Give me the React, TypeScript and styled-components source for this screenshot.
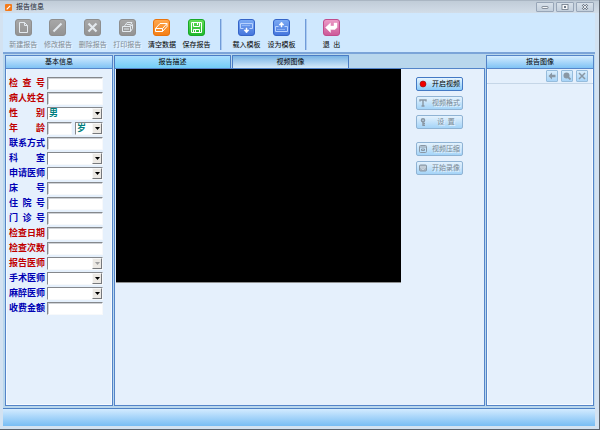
import React from "react";
import styled, { createGlobalStyle, css } from "styled-components";

const GlobalStyle = createGlobalStyle`
  * { box-sizing: border-box; }
  body {
    margin: 0;
    font-family: "Liberation Sans", "Noto Sans CJK SC", sans-serif;
    font-size: 7px;
    line-height: 10px;
    color: #000;
  }
  button, input, select { font: inherit; color: inherit; margin: 0; padding: 0; }
`;

const Window = styled.div`
  display: flex;
  flex-direction: column;
  min-height: 100vh;
  padding: 0 4px 3px 3px;
  background: #d3e2f1;
  border-right: 1px solid #5b626c;
  border-bottom: 1px solid #5b626c;
`;

const TitleBar = styled.header`
  display: flex;
  align-items: center;
  gap: 4px;
  height: 13px;
  margin: 0 -4px 0 -3px;
  padding: 0 5px;
  background: linear-gradient(#c0ccd8, #d2dde8);
  border-top: 1px solid #aab6c3;
`;

const Title = styled.h1`
  flex: 1;
  margin: 0;
  font-size: 7px;
  font-weight: 400;
  color: #1c2530;
`;

const Caption = styled.div`
  display: flex;
  gap: 2px;
`;

const CaptionButton = styled.button`
  display: flex;
  align-items: center;
  justify-content: center;
  width: 18px;
  height: 10px;
  background: linear-gradient(#d8e1ea, #c3cfdc);
  border: 1px solid #98a6b8;
  border-radius: 1px;
`;

const Toolbar = styled.nav`
  display: flex;
  height: 41px;
  padding: 6px 3px 0;
  background: #cfe8fe;
  border-bottom: 2px solid #7ba4d8;
`;

const ToolGroup = styled.div<{ $width: number }>`
  display: flex;
  justify-content: space-around;
  width: ${(p) => p.$width}px;
`;

const Divider = styled.div`
  width: 2px;
  height: 31px;
  margin: 0 7px 0 6px;
  background: #6f9bd8;
  border-right: 1px solid #a9c9f0;
`;

const ToolButton = styled.button`
  display: flex;
  flex-direction: column;
  align-items: center;
  gap: 4px;
  height: 32px;
  border: 0;
  background: none;
  white-space: nowrap;
  &:disabled {
    color: #808a93;
    text-shadow: 1px 1px #eef7ff;
  }
`;

const Workspace = styled.main`
  flex: 1;
  display: grid;
  grid-template-columns: 108px 1fr 108px;
  gap: 1px;
  padding: 1px 1px 2px 2px;
  background: #b9d7ed;
`;

const Panel = styled.section`
  display: flex;
  flex-direction: column;
  min-width: 0;
  background: #e5f0fc;
  border: 1px solid #5484c8;
  outline: 1px solid #f5faff;
  outline-offset: -2px;
`;

const PanelTitle = styled.h2`
  z-index: 1;
  height: 13px;
  margin: 0;
  font-size: 7px;
  line-height: 12px;
  font-weight: 400;
  text-align: center;
  background: linear-gradient(#d4ecff, #80c3f5);
  border-bottom: 1px solid #5686ca;
`;

const Form = styled.form`
  display: grid;
  grid-auto-rows: 13px;
  row-gap: 2px;
  padding: 8px 9px 8px 3px;
`;

const Row = styled.div`
  display: grid;
  grid-template-columns: 36px 1fr;
  column-gap: 2px;
  align-items: center;
`;

const FieldLabel = styled.label<{ $required?: boolean }>`
  font-size: 9px;
  line-height: 13px;
  font-weight: 700;
  text-align: justify;
  text-align-last: justify;
  color: ${(p) => (p.$required ? "#c00000" : "#0000b4")};
`;

const Split = styled.div`
  display: grid;
  grid-template-columns: 25px 1fr;
  gap: 3px;
`;

const sunken = css`
  width: 100%;
  height: 13px;
  background: #fff;
  border: 1px solid;
  border-color: #85888c #f7f9fb #f7f9fb #85888c;
  border-radius: 0;
`;

const Input = styled.input`
  ${sunken}
  min-width: 0;
  box-shadow: inset 1px 1px #cfd2d6;
`;

const SelectBox = styled.span`
  display: grid;
  & > * { grid-area: 1 / 1; }
`;

const Select = styled.select`
  ${sunken}
  appearance: none;
  padding-left: 1px;
  font-size: 9px;
  line-height: 11px;
  font-weight: 700;
  color: #008080;
  opacity: 1;
`;

const DropMark = styled.span<{ $off?: boolean }>`
  display: flex;
  align-items: center;
  justify-content: center;
  align-self: center;
  justify-self: end;
  width: 10px;
  height: 11px;
  margin-right: 1px;
  color: ${(p) => (p.$off ? "#a0a0a0" : "#000")};
  background: #ece9e4;
  border: 1px solid;
  border-color: #f8f8f8 #77797c #77797c #f8f8f8;
  pointer-events: none;
`;

const Center = styled.section`
  display: flex;
  flex-direction: column;
  min-width: 0;
`;

const Tabs = styled.div`
  display: flex;
  gap: 1px;
`;

const Tab = styled.button<{ $active?: boolean }>`
  width: 117px;
  height: 13px;
  line-height: 12px;
  border: 1px solid #4a7cc4;
  border-bottom: 0;
  border-radius: 1px 1px 0 0;
  background: ${(p) =>
    p.$active ? "linear-gradient(#79b3e4, #d5eafa)" : "linear-gradient(#a9deff, #72cdf6)"};
`;

const VideoPage = styled.div`
  flex: 1;
  display: grid;
  grid-template-columns: 1fr 83px;
  align-items: start;
  padding-left: 1px;
  background: #e5f0fc;
  border: 1px solid #5484c8;
`;

const Screen = styled.div`
  aspect-ratio: 4 / 3;
  background: #000;
  border-bottom: 1px solid #8e8f8f;
`;

const Controls = styled.div`
  display: flex;
  flex-direction: column;
  gap: 13px;
  width: 47px;
  margin: 8px 0 0 15px;
`;

const ControlGroup = styled.div`
  display: grid;
  gap: 5px;
`;

const ControlButton = styled.button`
  display: grid;
  grid-template-columns: 8px 1fr;
  gap: 4px;
  align-items: center;
  height: 14px;
  padding: 0 1px 0 2px;
  white-space: nowrap;
  background: linear-gradient(#e7f5ff, #8bcbf9);
  border: 1px solid #4379c4;
  border-radius: 2px;
  &:disabled {
    color: #7a8894;
    text-shadow: 1px 1px #eaf5fd;
    border-color: #8fb3d4;
    background: linear-gradient(#e4f2fd, #a4d4f8);
  }
`;

const ImageTools = styled.div`
  z-index: 1;
  display: flex;
  justify-content: flex-end;
  gap: 3px;
  height: 15px;
  padding: 1px 5px 0 0;
  border-bottom: 1px solid #c5d6e7;
`;

const ImageButton = styled.button`
  display: flex;
  align-items: center;
  justify-content: center;
  width: 12px;
  height: 12px;
  background: linear-gradient(#d9edfc, #a8d4f8);
  border: 1px solid #96bcdc;
  border-radius: 1px;
`;

const StatusBar = styled.footer`
  height: 18px;
  background: linear-gradient(#d3ebff, #78bdf4);
  border-top: 1px solid #4f82c4;
`;

type Kind = "new" | "edit" | "delete" | "print" | "clear" | "save" | "load" | "set" | "exit";

const tones: Record<string, [string, string, string]> = {
  gray: ["#a8a8a8", "#929292", "#8e8e8e"],
  orange: ["#ffa850", "#f47e14", "#e8730c"],
  green: ["#66dc58", "#1eb82c", "#18a828"],
  blue: ["#7cabf4", "#4474dc", "#3565c8"],
  pink: ["#ec9cc8", "#cc5898", "#c04c8c"],
};

const glyphs: Record<Kind, React.ReactNode> = {
  new: <path d="M4.5 3.5h5l3 3v7h-8zM9.5 3.5v3h3" />,
  edit: <path d="M4.5 12.5 12.5 4.5" strokeWidth="2" />,
  delete: <path d="M4.5 4.5l8 8M12.5 4.5l-8 8" strokeWidth="2.2" />,
  print: (
    <>
      <path d="M5.5 7 8 3.5h5L11 7M3.5 7.5h8v5h-8zM11.5 7.5l2-2v4l-2 3M5 10h5" />
      <path d="M7.5 5.5h4" />
    </>
  ),
  clear: <path d="M2.5 9.5 7 4.5H14L9.5 9.5zM2.5 9.5v3h7v-3M9.5 12.5l4.5-5v-3" />,
  save: <path d="M3.5 3.5h10v10h-10zM5.5 3.5v4h6v-4M5.5 13.5v-3h6v3M9.5 4v2M7.5 11v2" />,
  load: (
    <>
      <path d="M2.5 4.5h12v5h-3M2.5 4.5v5h3" stroke="#b7d2ff" />
      <path d="M4.5 6.5h8" strokeDasharray="1 1" stroke="#b7d2ff" />
      <path d="M8 9h1v2h2l-2.5 3-2.5-3h2z" fill="#fff" strokeWidth="0.5" />
    </>
  ),
  set: (
    <>
      <path d="M5.5 7.5h-3v5h12v-5h-3" stroke="#b7d2ff" />
      <path d="M4.5 10.5h8" strokeDasharray="1 1" stroke="#b7d2ff" />
      <path d="M8 8h1v-2h2l-2.5-3-2.5 3h2z" fill="#fff" strokeWidth="0.5" />
    </>
  ),
  exit: <path d="M2.5 8.5 7.5 4v3h3.5V4h3v4.5L12 10.5H7.5v3z" fill="#fff" strokeWidth="0.4" />,
};

function ToolIcon({ kind, tone }: { kind: Kind; tone: string }) {
  const [top, bottom, edge] = tones[tone];
  return (
    <svg width="17" height="17" viewBox="0 0 17 17" aria-hidden="true">
      <defs>
        <linearGradient id={"fill-" + kind} x1="0" y1="0" x2="0" y2="1">
          <stop offset="0" stopColor={top} />
          <stop offset="1" stopColor={bottom} />
        </linearGradient>
      </defs>
      <rect x="0.5" y="0.5" width="16" height="16" rx="2.5" fill={"url(#fill-" + kind + ")"} stroke={edge} />
      <g fill="none" stroke={tone === "gray" ? "#e3e9ee" : "#fff"}>{glyphs[kind]}</g>
    </svg>
  );
}

interface Tool { kind: Kind; tone: string; label: string; off?: boolean }

const toolGroups: { width: number; tools: Tool[] }[] = [
  {
    width: 208,
    tools: [
      { kind: "new", tone: "gray", label: "新建报告", off: true },
      { kind: "edit", tone: "gray", label: "修改报告", off: true },
      { kind: "delete", tone: "gray", label: "删除报告", off: true },
      { kind: "print", tone: "gray", label: "打印报告", off: true },
      { kind: "clear", tone: "orange", label: "清空数据" },
      { kind: "save", tone: "green", label: "保存报告" },
    ],
  },
  {
    width: 70,
    tools: [
      { kind: "load", tone: "blue", label: "载入模板" },
      { kind: "set", tone: "blue", label: "设为模板" },
    ],
  },
  { width: 35, tools: [{ kind: "exit", tone: "pink", label: "退\u2002出" }] },
];

interface Field { label: string; required?: boolean; type?: "select" | "age"; value?: string; off?: boolean }

const fields: Field[] = [
  { label: "检 查 号", required: true },
  { label: "病人姓名", required: true },
  { label: "性 别", required: true, type: "select", value: "男" },
  { label: "年 龄", required: true, type: "age", value: "岁" },
  { label: "联系方式" },
  { label: "科 室", type: "select" },
  { label: "申请医师", type: "select" },
  { label: "床 号" },
  { label: "住 院 号" },
  { label: "门 诊 号" },
  { label: "检查日期", required: true },
  { label: "检查次数", required: true },
  { label: "报告医师", required: true, type: "select", off: true },
  { label: "手术医师", type: "select" },
  { label: "麻醉医师", type: "select" },
  { label: "收费金额" },
];

function Dropdown({ id, value = "", off, name }: { id?: string; value?: string; off?: boolean; name?: string }) {
  return (
    <SelectBox>
      <Select id={id} defaultValue={value} disabled={off} aria-label={name}>
        <option value={value}>{value}</option>
      </Select>
      <DropMark $off={off}>
        <svg width="5" height="3" viewBox="0 0 5 3" aria-hidden="true">
          <path d="M0 0h5L2.5 3z" fill="currentColor" />
        </svg>
      </DropMark>
    </SelectBox>
  );
}

function FieldRow({ field, id }: { field: Field; id: string }) {
  return (
    <Row>
      <FieldLabel htmlFor={id} $required={field.required}>{field.label}</FieldLabel>
      {field.type === "select" ? (
        <Dropdown id={id} value={field.value} off={field.off} />
      ) : field.type === "age" ? (
        <Split>
          <Input id={id} />
          <Dropdown value={field.value} name="年龄单位" />
        </Split>
      ) : (
        <Input id={id} />
      )}
    </Row>
  );
}

const controlIcons = {
  record: <circle cx="4" cy="4" r="3" fill="#f00000" stroke="#8c1010" strokeWidth="0.6" />,
  format: <path d="M1 2.5V1h6v1.5M4 1v6M2.5 7h3" fill="none" stroke="#8997a4" strokeWidth="1.4" />,
  setup: (
    <g fill="none" stroke="#8997a4">
      <circle cx="4" cy="2.3" r="1.5" strokeWidth="1.6" />
      <path d="M4 3.5V8M4 5.5h2M4 7.5h2" strokeWidth="1.4" />
    </g>
  ),
  compress: (
    <g fill="none" stroke="#8997a4">
      <rect x="0.5" y="0.5" width="7" height="7" rx="1" />
      <path d="M1 2h6M2.5 4h3v1.5h-3z" />
    </g>
  ),
  capture: (
    <g fill="none" stroke="#8997a4">
      <rect x="0.5" y="1" width="7" height="6" rx="1" fill="#a9b6c2" />
      <path d="M1 3h6M2.5 4.5l1.5 1 1.5-1" stroke="#e8f0f6" strokeWidth="0.8" />
    </g>
  ),
};

const controlGroups: { icon: keyof typeof controlIcons; label: string; on?: boolean }[][] = [
  [
    { icon: "record", label: "开启视频", on: true },
    { icon: "format", label: "视频格式" },
    { icon: "setup", label: "设\u2002置" },
  ],
  [
    { icon: "compress", label: "视频压缩" },
    { icon: "capture", label: "开始录像" },
  ],
];

export default function App() {
  return (
    <>
      <GlobalStyle />
      <Window>
        <TitleBar>
          <svg width="7" height="7" viewBox="0 0 7 7" aria-hidden="true">
            <rect width="7" height="7" rx="1" fill="#f47a18" />
            <path d="M1.7 5.3 5.2 1.8" stroke="#fff" strokeWidth="1.2" />
          </svg>
          <Title>报告信息</Title>
          <Caption>
            <CaptionButton aria-label="最小化">
              <svg width="8" height="6" viewBox="0 0 8 6">
                <rect x="1" y="2.5" width="6" height="2" rx="0.5" fill="#f5f7f9" stroke="#6e7987" strokeWidth="0.8" />
              </svg>
            </CaptionButton>
            <CaptionButton aria-label="最大化">
              <svg width="8" height="6" viewBox="0 0 8 6">
                <rect x="1" y="0.5" width="6" height="5" fill="#f5f7f9" stroke="#6e7987" strokeWidth="0.8" />
                <rect x="3" y="2" width="2" height="2" fill="#6e7987" />
              </svg>
            </CaptionButton>
            <CaptionButton aria-label="关闭">
              <svg width="8" height="6" viewBox="0 0 8 6">
                <path d="M1.5 0.5l5 5M6.5 0.5l-5 5" stroke="#6e7987" strokeWidth="2.2" />
                <path d="M1.5 0.5l5 5M6.5 0.5l-5 5" stroke="#f5f7f9" strokeWidth="0.9" />
              </svg>
            </CaptionButton>
          </Caption>
        </TitleBar>

        <Toolbar>
          {toolGroups.map((group, i) => (
            <React.Fragment key={i}>
              {i > 0 && <Divider />}
              <ToolGroup $width={group.width}>
                {group.tools.map((t) => (
                  <ToolButton key={t.kind} disabled={t.off}>
                    <ToolIcon kind={t.kind} tone={t.tone} />
                    {t.label}
                  </ToolButton>
                ))}
              </ToolGroup>
            </React.Fragment>
          ))}
        </Toolbar>

        <Workspace>
          <Panel>
            <PanelTitle>基本信息</PanelTitle>
            <Form>
              {fields.map((f, i) => (
                <FieldRow key={f.label} field={f} id={"field-" + i} />
              ))}
            </Form>
          </Panel>

          <Center>
            <Tabs role="tablist">
              <Tab role="tab" aria-selected={false}>报告描述</Tab>
              <Tab role="tab" aria-selected={true} $active>视频图像</Tab>
            </Tabs>
            <VideoPage role="tabpanel">
              <Screen />
              <Controls>
                {controlGroups.map((group, i) => (
                  <ControlGroup key={i}>
                    {group.map((c) => (
                      <ControlButton key={c.icon} disabled={!c.on}>
                        <svg width="8" height="8" viewBox="0 0 8 8" aria-hidden="true">
                          {controlIcons[c.icon]}
                        </svg>
                        <span>{c.label}</span>
                      </ControlButton>
                    ))}
                  </ControlGroup>
                ))}
              </Controls>
            </VideoPage>
          </Center>

          <Panel>
            <PanelTitle>报告图像</PanelTitle>
            <ImageTools>
              <ImageButton aria-label="返回">
                <svg width="8" height="8" viewBox="0 0 8 8">
                  <path d="M0.5 4 4 0.5V2.8h3.5v2.4H4v2.3z" fill="#8997a4" />
                </svg>
              </ImageButton>
              <ImageButton aria-label="查看">
                <svg width="8" height="8" viewBox="0 0 8 8">
                  <circle cx="3.5" cy="3.5" r="3" fill="#8997a4" />
                  <path d="M5 5l2.5 2.5" stroke="#8997a4" strokeWidth="1.8" />
                </svg>
              </ImageButton>
              <ImageButton aria-label="删除">
                <svg width="8" height="8" viewBox="0 0 8 8">
                  <path d="M1 1l6 6M7 1l-6 6" stroke="#8997a4" strokeWidth="1.5" />
                </svg>
              </ImageButton>
            </ImageTools>
          </Panel>
        </Workspace>
        <StatusBar />
      </Window>
    </>
  );
}
